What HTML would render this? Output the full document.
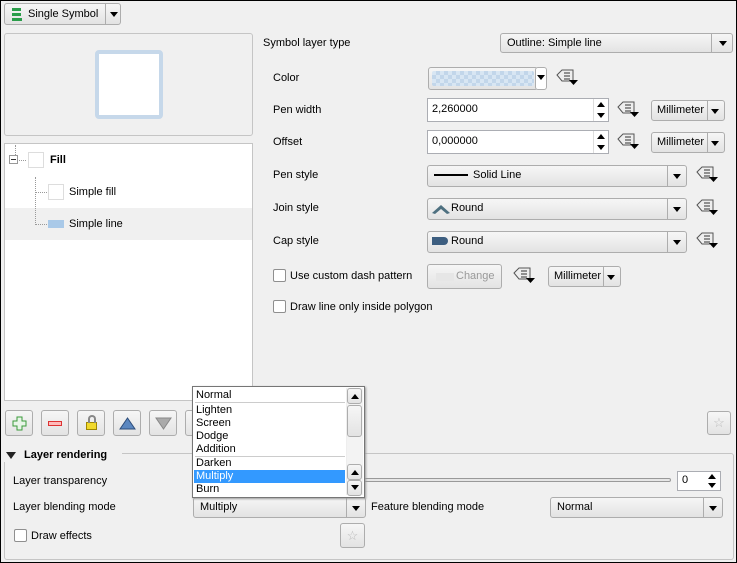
<!DOCTYPE html><html><head><style>
*{box-sizing:border-box}body{margin:0;width:737px;height:563px;background:#f0f0f0;font:11px "Liberation Sans",sans-serif;color:#000;position:relative;overflow:hidden}
.a{position:absolute}
.btn{position:absolute;border:1px solid #adadad;border-radius:3px;background:linear-gradient(#f6f6f6,#e3e3e3)}
.cb{position:absolute;border:1px solid #adadad;border-radius:3px;background:linear-gradient(#f6f6f6,#e3e3e3);padding:3px 6px;line-height:13px;white-space:nowrap}
.cb:after{content:"";position:absolute;right:5px;top:50%;margin-top:-2px;border:4px solid transparent;border-top:5px solid #000;border-bottom:0}
.sep{position:absolute;top:0;bottom:0;width:1px;background:#adadad}
.ed{position:absolute;background:#fff;border:1px solid #abadb3;padding:4px 4px;line-height:13px}
.chk{position:absolute;width:13px;height:13px;border:1px solid #8f8f8f;background:#fff;border-radius:2px}
.spin{position:absolute;right:1px;width:14px}
.up,.dn{position:absolute;left:3px;border:4px solid transparent}
.up{border-bottom:5px solid #000;top:3px;border-top:0}.dn{border-top:5px solid #000;bottom:3px;border-bottom:0}
</style></head><body>
<div class="btn" style="left:4px;top:3px;width:117px;height:22px"><svg class="a" style="left:6px;top:3px" width="12" height="15"><path d="M1 1h9v3H5v2h5v3H6v2h5v3H1v-3h5V9H1V6h4V4H1z" fill="#2a9d4a"/></svg><span class="a" style="left:23px;top:4px">Single Symbol</span><div class="sep" style="left:100px"></div><div class="a" style="left:105px;top:8px;border:4px solid transparent;border-top:5px solid #000"></div></div>
<div class="a" style="left:4px;top:33px;width:249px;height:103px;border:1px solid #c5c5c5;border-radius:3px"></div>
<div class="a" style="left:95px;top:50px;width:68px;height:69px;border:4px solid #c6d8ea;border-radius:4px;background:#fff"></div>
<div class="a" style="left:4px;top:143px;width:249px;height:258px;border:1px solid #c5c5c5;background:#fff"></div>
<div class="a" style="left:5px;top:208px;width:247px;height:32px;background:#f0f0f0"></div>
<div class="a" style="left:9px;top:155px;width:9px;height:9px;border:1px solid #999;background:#fff"><div class="a" style="left:1px;top:3px;width:5px;height:1px;background:#333"></div></div>
<div class="a" style="left:15px;top:145px;height:10px;border-left:1px dotted #999"></div>
<div class="a" style="left:19px;top:160px;width:7px;border-top:1px dotted #999"></div>
<div class="a" style="left:28px;top:152px;width:16px;height:16px;border:1px solid #ddd"></div>
<b class="a" style="left:50px;top:154px">Fill</b>
<div class="a" style="left:35px;top:177px;height:48px;border-left:1px dotted #999"></div>
<div class="a" style="left:35px;top:192px;width:12px;border-top:1px dotted #999"></div>
<div class="a" style="left:35px;top:224px;width:12px;border-top:1px dotted #999"></div>
<div class="a" style="left:48px;top:184px;width:16px;height:16px;border:1px solid #ddd"></div>
<div class="a" style="left:48px;top:220px;width:16px;height:8px;background:#a9c9e8"></div>
<span class="a" style="left:69px;top:186px">Simple fill</span><span class="a" style="left:69px;top:218px">Simple line</span>
<span class="a" style="left:263px;top:37px">Symbol layer type</span>
<div class="cb" style="left:500px;top:33px;width:233px;height:20px">Outline: Simple line<div class="sep" style="left:210px"></div></div>
<span class="a" style="left:273px;top:72px">Color</span><span class="a" style="left:273px;top:104px">Pen width</span><span class="a" style="left:273px;top:136px">Offset</span><span class="a" style="left:273px;top:169px">Pen style</span><span class="a" style="left:273px;top:202px">Join style</span><span class="a" style="left:273px;top:235px">Cap style</span>
<div class="btn" style="left:428px;top:67px;width:110px;height:23px;padding:3px"><div style="height:15px;border-radius:2px;background:repeating-conic-gradient(#c2d6ea 0 25%,#d8e6f3 0 50%) 0 0/8px 8px"></div></div>
<div class="btn" style="left:535px;top:67px;width:12px;height:23px;background:#fff"><div class="a" style="left:1px;top:7px;border:4px solid transparent;border-top:5px solid #000"></div></div>
<div class="ed" style="left:427px;top:98px;width:182px;height:24px">2,260000<div class="spin" style="top:0;height:22px;border-left:1px solid #ddd"><div class="up"></div><div class="dn"></div></div></div>
<div class="ed" style="left:427px;top:130px;width:182px;height:24px">0,000000<div class="spin" style="top:0;height:22px;border-left:1px solid #ddd"><div class="up"></div><div class="dn"></div></div></div>
<div class="cb" style="left:651px;top:100px;width:74px;height:21px;padding-left:5px">Millimeter<div class="sep" style="left:55px"></div></div>
<div class="cb" style="left:651px;top:132px;width:74px;height:21px;padding-left:5px">Millimeter<div class="sep" style="left:55px"></div></div>
<div class="cb" style="left:427px;top:165px;width:260px;height:22px"><span style="display:inline-block;width:34px;border-top:2px solid #000;vertical-align:middle;margin-right:5px"></span>Solid Line<div class="sep" style="left:239px"></div></div>
<div class="cb" style="left:427px;top:198px;width:260px;height:22px;padding-left:3px"><svg width="20" height="12" style="vertical-align:middle"><path d="M1 11L10 3l9 8-3 1-6-5-6 5z" fill="#4e7080"/></svg>Round<div class="sep" style="left:239px"></div></div>
<div class="cb" style="left:427px;top:231px;width:260px;height:22px;padding-left:3px"><svg width="20" height="10" style="vertical-align:middle"><path d="M1 1h12a4 4 0 0 1 0 8H1z" fill="#3d5e80"/></svg>Round<div class="sep" style="left:239px"></div></div>
<div class="chk" style="left:273px;top:269px"></div><span class="a" style="left:290px;top:270px">Use custom dash pattern</span>
<div class="btn" style="left:427px;top:264px;width:75px;height:25px;color:#999"><div class="a" style="left:8px;top:8px;width:18px;height:8px;background:#e6e6e6"></div><span class="a" style="left:28px;top:5px">Change</span></div>
<div class="cb" style="left:548px;top:266px;width:73px;height:21px;padding-left:5px">Millimeter<div class="sep" style="left:54px"></div></div>
<div class="chk" style="left:273px;top:300px"></div><span class="a" style="left:290px;top:301px">Draw line only inside polygon</span>
<svg class="a" style="left:0;top:0" width="737" height="563"><defs><g id="d"><path d="M0 8l5-5h11v11H5z" fill="#eee" stroke="#555"/><path d="M7 6h6M7 9h6M7 12h6" stroke="#333"/><path d="M12 13h9l-4.5 5z" fill="#000"/></g></defs>
<use href="#d" x="557" y="67"/><use href="#d" x="618" y="99"/><use href="#d" x="618" y="131"/><use href="#d" x="697" y="164"/><use href="#d" x="697" y="197"/><use href="#d" x="697" y="230"/><use href="#d" x="514" y="265"/></svg>
<div class="btn" style="left:5px;top:410px;width:28px;height:26px"><svg class="a" style="left:6px;top:5px" width="15" height="15"><path d="M5 1h5v4h4v5h-4v4H5v-4H1V5h4z" fill="#e8f5e8" stroke="#3a9a3a"/></svg></div>
<div class="btn" style="left:41px;top:410px;width:28px;height:26px"><div class="a" style="left:6px;top:10px;width:14px;height:5px;border:1px solid #d33;background:#fbb"></div></div>
<div class="btn" style="left:77px;top:410px;width:28px;height:26px"><div class="a" style="left:8px;top:11px;width:11px;height:8px;background:#f1d92c;border:1px solid #a08800"></div><div class="a" style="left:10px;top:4px;width:8px;height:8px;border:2px solid #888;border-bottom:0;border-radius:4px 4px 0 0"></div></div>
<div class="btn" style="left:113px;top:410px;width:28px;height:26px"><svg class="a" style="left:5px;top:6px" width="17" height="13"><path d="M1 12L8.5 1 16 12z" fill="#5b87c0" stroke="#2d4d7a"/></svg></div>
<div class="btn" style="left:149px;top:410px;width:28px;height:26px"><svg class="a" style="left:5px;top:6px" width="17" height="13"><path d="M1 1h15L8.5 12z" fill="#aaa" stroke="#888"/></svg></div>
<div class="btn" style="left:185px;top:410px;width:28px;height:26px"></div>
<div class="btn" style="left:707px;top:411px;width:24px;height:24px;color:#bbb;text-align:center;line-height:22px;font-size:13px">☆</div>
<div class="a" style="left:4px;top:453px;width:730px;height:107px;border:1px solid #c5c5c5;border-radius:3px"></div>
<div class="a" style="left:2px;top:446px;width:120px;height:16px;background:#f0f0f0"></div>
<div class="a" style="left:6px;top:452px;border:5px solid transparent;border-top:7px solid #222"></div>
<b class="a" style="left:24px;top:449px">Layer rendering</b>
<span class="a" style="left:13px;top:475px">Layer transparency</span>
<div class="a" style="left:360px;top:478px;width:311px;height:4px;border:1px solid #999;border-radius:2px;background:#e6e6e6"></div>
<div class="ed" style="left:677px;top:471px;width:44px;height:20px;padding:2px 4px">0<div class="spin" style="top:0;height:18px"><div class="up" style="top:2px"></div><div class="dn" style="bottom:2px"></div></div></div>
<span class="a" style="left:13px;top:501px">Layer blending mode</span>
<div class="cb" style="left:193px;top:497px;width:173px;height:21px">Multiply<div class="sep" style="left:152px"></div></div>
<span class="a" style="left:371px;top:501px">Feature blending mode</span>
<div class="cb" style="left:550px;top:497px;width:173px;height:21px">Normal<div class="sep" style="left:152px"></div></div>
<div class="chk" style="left:14px;top:529px"></div><span class="a" style="left:31px;top:530px">Draw effects</span>
<div class="btn" style="left:340px;top:523px;width:25px;height:25px;color:#bbb;text-align:center;line-height:23px;font-size:13px">☆</div>
<div class="a" style="left:192px;top:386px;width:173px;height:112px;background:#fff;border:1px solid #767676;box-shadow:1px 1px 2px #999"></div>
<div class="a" style="left:196px;top:389px;line-height:13px">Normal</div>
<div class="a" style="left:195px;top:402px;width:150px;border-top:1px solid #ccc"></div>
<div class="a" style="left:196px;top:404px;line-height:13px">Lighten<br>Screen<br>Dodge<br>Addition</div>
<div class="a" style="left:195px;top:456px;width:150px;border-top:1px solid #ccc"></div>
<div class="a" style="left:194px;top:470px;width:151px;height:13px;background:#3399ff"></div>
<div class="a" style="left:196px;top:457px;line-height:13px">Darken<br><span style="color:#fff">Multiply</span><br>Burn</div>
<div class="a" style="left:346px;top:388px;width:17px;height:107px;background:#f3f3f3;border-left:1px solid #eee"></div>
<div class="btn" style="left:347px;top:388px;width:15px;height:16px"><div class="up" style="left:3px;top:5px"></div></div>
<div class="btn" style="left:347px;top:405px;width:15px;height:32px"></div>
<div class="btn" style="left:347px;top:464px;width:15px;height:16px"><div class="up" style="left:3px;top:5px"></div></div>
<div class="btn" style="left:347px;top:480px;width:15px;height:16px"><div class="dn" style="left:3px;bottom:5px"></div></div>
<div class="a" style="left:0;top:0;width:737px;height:563px;border:1px solid #000;pointer-events:none"></div>
</body></html>
